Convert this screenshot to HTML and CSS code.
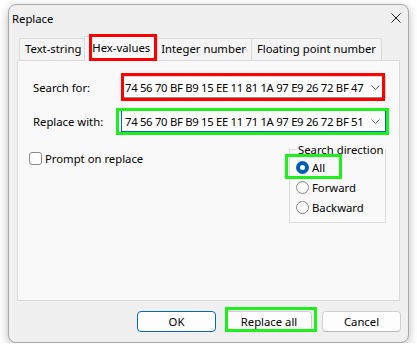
FILE: index.html
```html
<!DOCTYPE html>
<html lang="en">
<head>
    <meta charset="utf-8" />
    <title>Replace</title>
    <link rel="stylesheet" href="styles.css">
</head>
<body>
<div class="window">
    <div class="titlebar">
        <span class="title">Replace</span>
        <svg class="close" width="10" height="10" viewBox="0 0 10 10">
            <path d="M0.5 0.5 L9.5 9.5 M9.5 0.5 L0.5 9.5" stroke="#1a1a1a" stroke-width="1" fill="none" />
        </svg>
    </div>

    <div class="tabs">
        <div class="tab">Text-string</div>
        <div class="tab selected mark-tab">Hex-values</div>
        <div class="tab">Integer number</div>
        <div class="tab">Floating point number</div>
    </div>

    <div class="panel">
        <div class="field-row">
            <label class="field-label">Search for:</label>
            <div class="combo mark-search">
                <span class="combo-text">74 56 70 BF B9 15 EE 11 81 1A 97 E9 26 72 BF 47</span>
                <svg class="chevron" width="9" height="5" viewBox="0 0 9 5">
                    <path d="M0.5 0.5 L4.5 4.5 L8.5 0.5" stroke="#6a6a6a" fill="none" />
                </svg>
            </div>
        </div>
        <div class="field-row">
            <label class="field-label">Replace with:</label>
            <div class="combo focused mark-replace">
                <span class="combo-text">74 56 70 BF B9 15 EE 11 71 1A 97 E9 26 72 BF 51</span>
                <svg class="chevron" width="9" height="5" viewBox="0 0 9 5">
                    <path d="M0.5 0.5 L4.5 4.5 L8.5 0.5" stroke="#6a6a6a" fill="none" />
                </svg>
            </div>
        </div>

        <div class="options">
            <label class="check">
                <input type="checkbox">
                <span>Prompt on replace</span>
            </label>

            <fieldset class="direction">
                <legend>Search direction</legend>
                <label class="radio mark-all">
                    <input type="radio" name="dir" checked>
                    <span>All</span>
                </label>
                <label class="radio">
                    <input type="radio" name="dir">
                    <span>Forward</span>
                </label>
                <label class="radio">
                    <input type="radio" name="dir">
                    <span>Backward</span>
                </label>
            </fieldset>
        </div>
    </div>

    <div class="buttons">
        <button class="btn default">OK</button>
        <button class="btn wide mark-replace-all">Replace all</button>
        <button class="btn">Cancel</button>
    </div>
</div>
</body>
</html>
```

FILE: styles.css
```css
/* Page: white backdrop, dialog window sits near the top left */
body {
    margin: 0;
    background-color: #ffffff;
    font-family: "Noto Sans", "Open Sans", sans-serif;
    font-size: 11.3px;
    color: #000;
}
.window {
    box-sizing: border-box;
    display: flex;
    flex-direction: column;
    margin: 4px 0 0 8px;
    width: 401px;
    height: 339px;
    background-color: #f0f0f0;
    border: 1px solid #a8a8a8;
    border-radius: 8px;
    box-shadow: 0 3px 10px rgba(0, 0, 0, 0.28);
}
.titlebar {
    display: flex;
    align-items: center;
    justify-content: space-between;
    height: 26px;
    padding: 0 7px 0 3px;
}
/* Tab strip */
.tabs {
    display: flex;
    align-items: flex-end;
    height: 24px;
    margin: 5px 0 0 8px;
    padding-left: 2px;
}
.tab {
    position: relative;
    box-sizing: border-box;
    height: 22px;
    line-height: 20px;
    padding: 0 5px;
    background-color: #f4f4f4;
    border: 1px solid #dadada;
    border-bottom: none;
    margin-left: -1px;
    white-space: nowrap;
}
.tab:first-child {
    margin-left: 0;
}
.tab.selected {
    z-index: 2;
    height: 25px;
    line-height: 21px;
    margin: 0 -2px -1px -3px;
    padding: 0 7px;
    background-color: #f9f9f9;
}
.panel {
    flex: 1;
    margin-left: 8px;
    width: 383px;
    box-sizing: border-box;
    padding: 15px 13px 0 11px;
    background-color: #f9f9f9;
    border: 1px solid #dadada;
}
.field-row {
    display: flex;
    align-items: center;
    margin-bottom: 12px;
}
.field-label {
    width: 88px;
    margin-left: 4px;
}
.combo {
    position: relative;
    box-sizing: border-box;
    display: flex;
    align-items: center;
    justify-content: space-between;
    width: 265px;
    height: 22px;
    padding: 0 5px 0 3px;
    background-color: #ffffff;
    border: 1px solid #d4d4d4;
    border-bottom-color: #8a8a8a;
    white-space: nowrap;
}
.combo-text {
    letter-spacing: -0.3px;
}
.combo.focused {
    border-color: #0067c0;
}
.options {
    display: flex;
    justify-content: space-between;
    align-items: flex-start;
}
.check {
    display: flex;
    align-items: center;
    gap: 3px;
    margin-top: 7px;
}
.check input {
    appearance: none;
    -webkit-appearance: none;
    margin: 0;
    width: 13px;
    height: 13px;
    box-sizing: border-box;
    border: 1px solid #8a8a8a;
    border-radius: 3px;
    background-color: #fdfdfd;
}
/* Group box */
.direction {
    margin: -2px 0 0 0;
    padding: 0 0 5px 6px;
    width: 97px;
    box-sizing: border-box;
    border: 1px solid #dcdcdc;
}
.direction legend {
    padding: 0 1px;
    margin-left: 1px;
    white-space: nowrap;
}
.radio {
    position: relative;
    display: flex;
    align-items: center;
    gap: 3px;
    height: 20px;
}
.radio input {
    appearance: none;
    -webkit-appearance: none;
    margin: 0;
    width: 13px;
    height: 13px;
    box-sizing: border-box;
    border: 1px solid #8a8a8a;
    border-radius: 50%;
    background-color: #fbfbfb;
}
.radio input:checked {
    border: 4px solid #005fb8;
    background-color: #ffffff;
}
/* Dialog buttons */
.buttons {
    display: flex;
    justify-content: flex-end;
    gap: 10px;
    padding: 10px 7px 10px 0;
}
.btn {
    position: relative;
    box-sizing: border-box;
    width: 79px;
    height: 21px;
    padding: 0;
    font: inherit;
    color: #000;
    background-color: #fdfdfd;
    border: 1px solid #d0d0d0;
    border-bottom-color: #b8b8b8;
    border-radius: 4px;
}
.btn.wide {
    width: 86px;
}
.btn.default {
    border: 1px solid #0067c0;
}
/* Hand-drawn annotation boxes over the controls */
.mark-tab::after,
.mark-search::after,
.mark-replace::after,
.mark-all::after,
.mark-replace-all::after {
    content: "";
    position: absolute;
    box-sizing: border-box;
    border: 3px solid #ff0000;
    pointer-events: none;
}
.mark-tab::after {
    left: 4px;
    right: 0;
    top: -3px;
    bottom: 0;
}
.mark-search::after {
    left: -1px;
    right: 0;
    top: -4px;
    bottom: -4px;
}
.mark-replace::after {
    border-color: #1ef01e;
    left: -6px;
    right: -4px;
    top: -3px;
    bottom: -4px;
}
.mark-all::after {
    border-color: #1ef01e;
    left: -11px;
    top: -3px;
    bottom: -2px;
    width: 57px;
}
.mark-replace-all::after {
    border-color: #1ef01e;
    left: -2px;
    right: -6px;
    top: -5px;
    bottom: -1px;
}
```
